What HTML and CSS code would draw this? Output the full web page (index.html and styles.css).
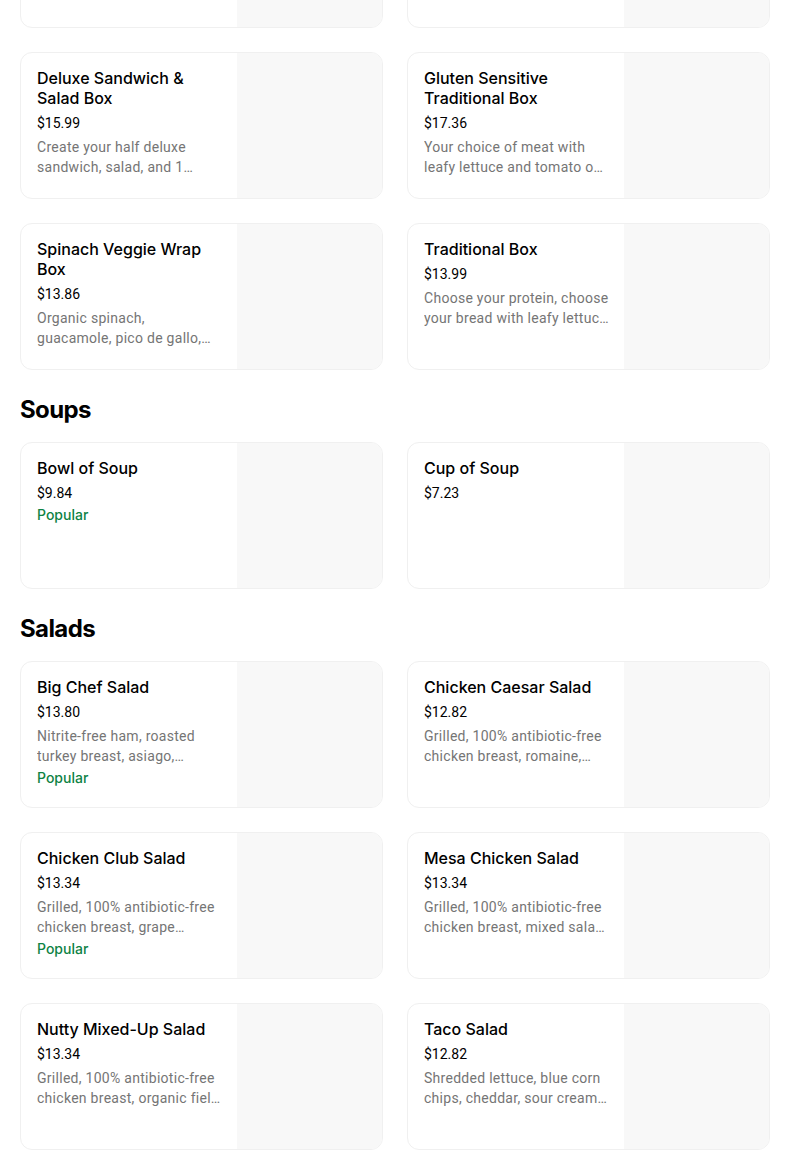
FILE: index.html
```html
<!DOCTYPE html>
<html lang="en">
<head>
<meta charset="utf-8">
<title>Menu</title>
<link rel="stylesheet" href="styles.css">
</head>
<body>
<main class="menu">
  <section class="section">
    <div class="grid">
      <article class="card">
        <div class="info">
          <h3 class="title">Half Sandwich &amp; Soup</h3>
          <div class="price">$12.99</div>
        </div>
        <div class="thumb"></div>
      </article>
      <article class="card">
        <div class="info">
          <h3 class="title">Sandwich Box</h3>
          <div class="price">$14.99</div>
        </div>
        <div class="thumb"></div>
      </article>
      <article class="card">
        <div class="info">
          <h3 class="title">Deluxe Sandwich &amp; Salad Box</h3>
          <div class="price">$15.99</div>
          <p class="desc">Create your half deluxe sandwich, salad, and 1 accompaniment with a cookie.</p>
        </div>
        <div class="thumb"></div>
      </article>
      <article class="card">
        <div class="info">
          <h3 class="title">Gluten Sensitive Traditional Box</h3>
          <div class="price">$17.36</div>
          <p class="desc">Your choice of meat with leafy lettuce and tomato on gluten sensitive bread.</p>
        </div>
        <div class="thumb"></div>
      </article>
      <article class="card">
        <div class="info">
          <h3 class="title">Spinach Veggie Wrap Box</h3>
          <div class="price">$13.86</div>
          <p class="desc">Organic spinach, guacamole, pico de gallo, cheddar and more.</p>
        </div>
        <div class="thumb"></div>
      </article>
      <article class="card">
        <div class="info">
          <h3 class="title">Traditional Box</h3>
          <div class="price">$13.99</div>
          <p class="desc">Choose your protein, choose your bread with leafy lettuce and tomato.</p>
        </div>
        <div class="thumb"></div>
      </article>
    </div>
  </section>

  <section class="section">
    <h2 class="heading">Soups</h2>
    <div class="grid">
      <article class="card">
        <div class="info">
          <h3 class="title">Bowl of Soup</h3>
          <div class="price">$9.84</div>
          <div class="badge">Popular</div>
        </div>
        <div class="thumb"></div>
      </article>
      <article class="card">
        <div class="info">
          <h3 class="title">Cup of Soup</h3>
          <div class="price">$7.23</div>
        </div>
        <div class="thumb"></div>
      </article>
    </div>
  </section>

  <section class="section">
    <h2 class="heading">Salads</h2>
    <div class="grid">
      <article class="card">
        <div class="info">
          <h3 class="title">Big Chef Salad</h3>
          <div class="price">$13.80</div>
          <p class="desc">Nitrite-free ham, roasted turkey breast, asiago, applewood-smoked bacon, egg and more.</p>
          <div class="badge">Popular</div>
        </div>
        <div class="thumb"></div>
      </article>
      <article class="card">
        <div class="info">
          <h3 class="title">Chicken Caesar Salad</h3>
          <div class="price">$12.82</div>
          <p class="desc">Grilled, 100% antibiotic-free chicken breast, romaine, asiago and croutons.</p>
        </div>
        <div class="thumb"></div>
      </article>
      <article class="card">
        <div class="info">
          <h3 class="title">Chicken Club Salad</h3>
          <div class="price">$13.34</div>
          <p class="desc">Grilled, 100% antibiotic-free chicken breast, grape tomatoes, bacon and more.</p>
          <div class="badge">Popular</div>
        </div>
        <div class="thumb"></div>
      </article>
      <article class="card">
        <div class="info">
          <h3 class="title">Mesa Chicken Salad</h3>
          <div class="price">$13.34</div>
          <p class="desc">Grilled, 100% antibiotic-free chicken breast, mixed salad greens and more.</p>
        </div>
        <div class="thumb"></div>
      </article>
      <article class="card">
        <div class="info">
          <h3 class="title">Nutty Mixed-Up Salad</h3>
          <div class="price">$13.34</div>
          <p class="desc">Grilled, 100% antibiotic-free chicken breast, organic field greens and more.</p>
        </div>
        <div class="thumb"></div>
      </article>
      <article class="card">
        <div class="info">
          <h3 class="title">Taco Salad</h3>
          <div class="price">$12.82</div>
          <p class="desc">Shredded lettuce, blue corn chips, cheddar, sour cream, salsa and more.</p>
        </div>
        <div class="thumb"></div>
      </article>
    </div>
  </section>
</main>
</body>
</html>
```

FILE: styles.css
```css
* {
  box-sizing: border-box;
}

html, body {
  margin: 0;
  padding: 0;
  background: #ffffff;
}

body {
  font-family: "Inter", "Roboto", "Liberation Sans", sans-serif;
  color: #000000;
  overflow: hidden;
}

.menu {
  width: 750px;
  margin-left: 20px;
  margin-top: -119px;
}

.section {
  display: flex;
  flex-direction: column;
}

.heading {
  margin: 24px 0 16px;
  font-size: 24px;
  line-height: 32px;
  font-weight: 700;
  letter-spacing: -0.6px;
}

.grid {
  display: grid;
  grid-template-columns: 363px 363px;
  column-gap: 24px;
  row-gap: 24px;
}

.card {
  display: flex;
  height: 147px;
  border: 1px solid #f0f0f0;
  border-radius: 12px;
  overflow: hidden;
  background: #ffffff;
}

.info {
  flex: 1;
  min-width: 0;
  padding: 15px 15px 0 16px;
  display: flex;
  flex-direction: column;
}

.title {
  margin: 0;
  font-size: 16px;
  line-height: 20px;
  font-weight: 500;
  color: #000000;
}

.price {
  margin-top: 5px;
  font-family: "Roboto", "Liberation Sans", sans-serif;
  font-size: 14px;
  line-height: 20px;
  color: #000000;
}

.desc {
  margin: 4px 0 0;
  font-family: "Roboto", "Liberation Sans", sans-serif;
  font-size: 14px;
  line-height: 20px;
  letter-spacing: 0.28px;
  color: #757575;
  display: -webkit-box;
  -webkit-line-clamp: 2;
  -webkit-box-orient: vertical;
  overflow: hidden;
}

.badge {
  margin-top: 2px;
  font-size: 14px;
  line-height: 20px;
  font-weight: 500;
  color: #0e8345;
}

.thumb {
  flex: 0 0 145px;
  height: 100%;
  background: #f8f8f8;
}
```
